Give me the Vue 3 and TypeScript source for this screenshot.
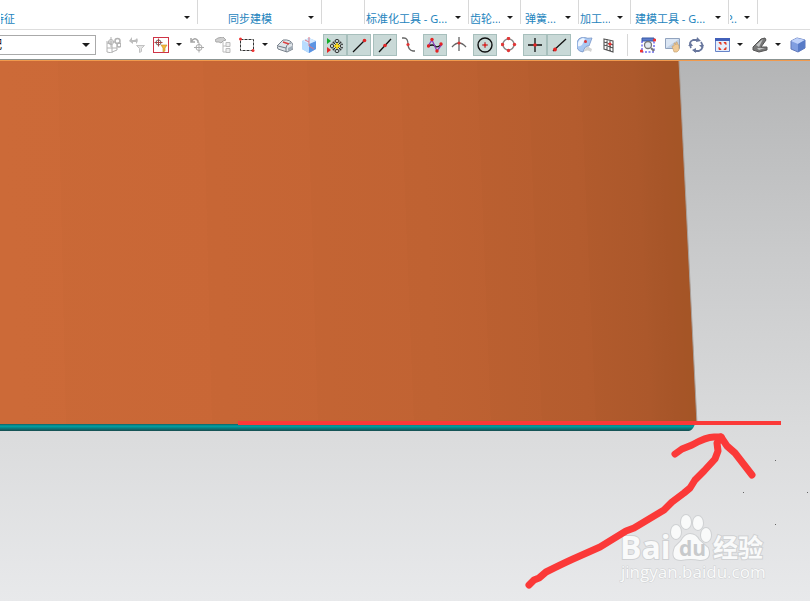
<script setup lang="ts">
interface RibbonGroup { label: string; size: string }
interface Tool { icon: string; label: string; on?: boolean; menu?: boolean }

const ribbon: RibbonGroup[] = [
  { label: '特征', size: 'feature' },
  { label: '同步建模', size: 'sync' },
  { label: '', size: 'blank' },
  { label: '标准化工具 - G...', size: 'standard' },
  { label: '齿轮...', size: 'gear' },
  { label: '弹簧...', size: 'spring' },
  { label: '加工...', size: 'gear' },
  { label: '建模工具 - G...', size: 'model' },
  { label: 'P..', size: 'mini' },
]

const selectionTools: Tool[][] = [
  [
    { icon: 'assembly', label: '装配约束' },
    { icon: 'reset', label: '重置过滤器' },
    { icon: 'filter', label: '选择过滤器', menu: true },
    { icon: 'rotate', label: '定向' },
  ],
  [
    { icon: 'tree', label: '层次选择' },
    { icon: 'marquee', label: '矩形选择', menu: true },
  ],
  [{ icon: 'body', label: '实体面' }, { icon: 'glass', label: '透明体' }],
  [{ icon: 'snap', label: '启用捕捉点', on: true }, { icon: 'endpoint', label: '端点', on: true }],
  [{ icon: 'midpoint', label: '中点', on: true }, { icon: 'control', label: '控制点' }],
  [{ icon: 'spline', label: '极点', on: true }, { icon: 'intersect', label: '交点' }],
  [{ icon: 'center', label: '圆弧中心', on: true }, { icon: 'quadrant', label: '象限点' }],
  [{ icon: 'point', label: '现有点', on: true }, { icon: 'oncurve', label: '曲线上的点', on: true }],
  [{ icon: 'surface', label: '面上的点' }, { icon: 'grid', label: '有界栅格' }],
]

const viewTools: Tool[][] = [
  [{ icon: 'zoomfit', label: '缩放' }, { icon: 'pan', label: '平移' }, { icon: 'orbit', label: '旋转' }],
  [{ icon: 'window', label: '适合窗口', menu: true }],
  [{ icon: 'section', label: '剖切', menu: true }],
  [{ icon: 'cube', label: '着色' }],
]

const sections = [selectionTools, viewTools]

const art: Record<string, string> = {
  assembly: `<g fill="none" stroke="#b2b2b2"><path d="M2 6l5 1v9l-5-1zM2 11h10M7 15l5-2V9"/><circle cx="6" cy="5" r="2.5"/><path d="M6 0v10M1 5h10"/><circle cx="12.500" cy="4" r="2.500" stroke-width="1.500"/><circle cx="14" cy="8" r="2" stroke-width="1.500"/></g>`,
  reset: `<path d="M3 0L0 4l4 3V5h3v2q3-3 1-6-1 2-3 2H3z" fill="#bcbcbc"/><path d="M7.500 8.500h8l-3 3v3l-2 1v-4z" fill="#e3e3e3" stroke="#c2c2c2"/>`,
  filter: `<rect x=".5" y=".5" width="15" height="15" fill="#fff" stroke="#cf3446"/><circle cx="5.500" cy="5.500" r="2.500" fill="none" stroke="#666"/><path d="M5.500 1.500v8M1.500 5.500h8" stroke="#a44"/><path d="M8 8h6l-2 3v3l-2 1v-4z" fill="#f8ba38" stroke="#bd882f" stroke-width=".6"/>`,
  rotate: `<path d="M2 1v4h4M2 5q4-6 7-1v2" fill="none" stroke="#a5a5a5" stroke-width="1.500"/><circle cx="10" cy="10.500" r="3" fill="none" stroke="#aaa"/><path d="M10 5.500v10M5 10.500h10" stroke="#aaa"/>`,
  tree: `<path d="M0 3l3-2 5-1 3 3-3 1-2 2-2-1-3 0z" fill="#cfcfcf" stroke="#a9a9a9"/><path d="M8 5v10h3M8 9h3" stroke="#bbb" fill="none"/><path d="M11 5.500h4v4h-4zM11 11.500h4v4h-4z" fill="#eee" stroke="#bbb"/>`,
  marquee: `<rect x="1.500" y="2.500" width="13" height="11" fill="none" stroke="#333" stroke-dasharray="3 1"/><circle cx="1.500" cy="2" r="1.500" fill="#e33"/><circle cx="14" cy="13.500" r="1.500" fill="#e33"/>`,
  body: `<path d="M0 9l6-6q8-1 10 5v4l-6 3-9-3z" fill="#dfe4e9" stroke="#7a838d"/><path d="M1 9l8 2v4M9 11q1-5 5-5" fill="none" stroke="#737d88"/><path d="M6 5l6 2" stroke="#dc4040" stroke-width="1.500"/><path d="M11 11l4-2v3l-4 2z" fill="#a2aeb9"/>`,
  glass: `<path d="M1 4l7-3 7 3v8l-7 4-7-4z" fill="#8dbdf2"/><path d="M1 4l7 3v9l-7-4z" fill="#b8dcff"/><path d="M8 7l7-3v8l-7 4z" fill="#5c94e3"/><path d="M1 4l7-3 7 3-7 3z" fill="#d5eaff"/><path d="M8 0v9l5 3M8 5L4 3" fill="none" stroke="#dc7885"/>`,
  snap: `<path d="M0 1l4 3-4 3z" fill="#13ab27"/><path d="M0 10l4 3-4 3z" fill="#e32727"/><g stroke="#222" fill="#d9e5e5"><path d="M7 6l6 6M13 6l-6 6"/><ellipse cx="10" cy="4" rx="2" ry="1.500"/><ellipse cx="10" cy="14" rx="2" ry="1.500"/><ellipse cx="5" cy="9" rx="1.500" ry="2"/><ellipse cx="15" cy="9" rx="1.500" ry="2"/></g><circle cx="6.500" cy="5.500" r="1" fill="#333"/><circle cx="13.500" cy="5.500" r="1" fill="#333"/><circle cx="6.500" cy="12.500" r="1" fill="#333"/><circle cx="13.500" cy="12.500" r="1" fill="#333"/><path d="M10 6l1 2 2 1-2 1-1 2-1-2-2-1 2-1z" fill="#ffe11b" stroke="#e9c614"/>`,
  endpoint: `<path d="M2 15L13 4" stroke="#111" stroke-width="1.300"/><circle cx="13.500" cy="3.500" r="1.800" fill="#e22424"/>`,
  midpoint: `<path d="M2 15L14 2" stroke="#111" stroke-width="1.300"/><circle cx="8" cy="8.500" r="1.800" fill="#e22424"/>`,
  control: `<path d="M1 1h2q4 0 4 6t5 7h2" fill="none" stroke="#666" stroke-width="1.300"/><circle cx="7" cy="7.500" r="1.600" fill="#e23636"/>`,
  spline: `<path d="M1 9q5-2 7 0t6-1" fill="none" stroke="#111" stroke-width="1.300"/><path d="M1 9l4-6 5 11 5-7" fill="none" stroke="#8b41bd" stroke-width="1.300"/><g fill="#e22424"><circle cx="1.500" cy="9" r="1.700"/><circle cx="5" cy="2.500" r="1.700"/><circle cx="10" cy="14" r="1.700"/><circle cx="14" cy="7" r="1.700"/></g>`,
  intersect: `<path d="M1 10q7-8 14 0M8 0v14" fill="none" stroke="#666" stroke-width="1.300"/><circle cx="8" cy="6" r="1.500" fill="#dc3535"/>`,
  center: `<circle cx="8" cy="8" r="7" fill="none" stroke="#111" stroke-width="1.400"/><path d="M8 5v6M5 8h6" stroke="#a33"/><circle cx="8" cy="8" r="1.500" fill="#e22424"/>`,
  quadrant: `<circle cx="7.500" cy="7.500" r="5.500" fill="none" stroke="#888" stroke-width="1.400"/><g fill="#e13838"><circle cx="7.500" cy="1.500" r="1.700"/><circle cx="7.500" cy="13.500" r="1.700"/><circle cx="1.500" cy="7.500" r="1.700"/><circle cx="13.500" cy="7.500" r="1.700"/></g>`,
  point: `<path d="M8 1v14M1 8h14" stroke="#111" stroke-width="1.300"/><circle cx="8" cy="8" r="1.800" fill="#e22424"/>`,
  oncurve: `<path d="M2 14L15 2" stroke="#111" stroke-width="1.300"/><circle cx="4" cy="12.500" r="1.900" fill="#e22424"/>`,
  surface: `<path d="M10 9l5 3-1 3q-3-3-8 0z" fill="#d3d3d3"/><path d="M0 5q1-4 6-5 5 2 9 1l-3 8q-4-1-6 6-4 0-6-4z" fill="#a9c8f2" stroke="#7996c7" stroke-width=".8"/><path d="M1 6q1-4 5-5l2 1-3 6q-3 2-4 1z" fill="#edf4ff"/><circle cx="8.500" cy="4.500" r="1.500" fill="#dc3535"/>`,
  grid: `<path d="M3 2l9 2v11l-9-3zM6 2v11M9 3v11M3 5l9 3M3 8l9 3" fill="none" stroke="#555" stroke-width="1.100"/><circle cx="9" cy="7" r="1.600" fill="#e33"/>`,
  zoomfit: `<path d="M2 1h12v3H2z" fill="#5d7dcb" stroke="#3659a5"/><path d="M2 4v11h12V4" fill="none" stroke="#2222e5" stroke-dasharray="2 1.500"/><circle cx="8" cy="8" r="3.500" fill="#e3eaf0" stroke="#777" stroke-width="1.300"/><path d="M11 11l3 3" stroke="#777" stroke-width="2"/><circle cx="1.500" cy="14" r="1.600" fill="#e33"/><circle cx="14.500" cy="3" r="1.600" fill="#e33"/>`,
  pan: `<path d="M1.500 1.500h14v10h-14z" fill="#dbe6f4" stroke="#91a3be"/><path d="M2 11l13-9v9z" fill="#bfd0e6"/><path d="M8 9l2 0V6h1l1 2V5h1l1 3h1v5l-2 2h-3z" fill="#f0ca96" stroke="#c19d70" stroke-width=".6"/>`,
  orbit: `<path d="M3 11Q0 5 5 3l5 0M13 5q4 6-2 9H6" fill="none" stroke="#68779e" stroke-width="1.800"/><path d="M9 0l4 4-5 1zM8 11v5l-4-3zM0 9l3-3 2 3zM11 8h5l-2 3z" fill="#68779e"/>`,
  window: `<path d="M1.500 1.500h14v13h-14z" fill="#e5edfc" stroke="#6684c9"/><path d="M1 1h15v3H1z" fill="#4260b9"/><path d="M5 5.500h2v2zM12 5.500v2l-2-2zM5 12.500v-2l2 2zM12 12.500h-2l2-2z" fill="#e33a24" stroke="#e33a24"/>`,
  section: `<path d="M1 10l8-8 4-1 1 2-5 7h6v3l-8 2-6-2z" fill="#777" stroke="#555"/><path d="M4 8l7-6-4 8zM5 11l8 0-6 2z" fill="#c3c5c5"/>`,
  cube: `<path d="M1 4l6-3 8 2v8l-7 4-7-3z" fill="#809ee0" stroke="#6078ba"/><path d="M1 4l6-3 8 2-7 4z" fill="#bfd2fa"/><path d="M8 7l7-4v8l-7 4z" fill="#587bc7"/>`,
}
</script>

<template>
  <main class="app">
    <nav class="ribbon" aria-label="功能区">
      <div v-for="(group, i) in ribbon" :key="i" class="group" :class="group.size">
        <template v-if="group.label">
          <span class="name"><span class="label">{{ group.label }}</span></span>
          <button class="more" type="button" :aria-label="group.label"><i class="caret"></i></button>
        </template>
      </div>
    </nav>

    <div class="toolbar" role="toolbar" aria-label="选择条">
      <div class="scope">
        <select aria-label="选择范围"><option>整个装配</option></select>
        <i class="caret"></i>
      </div>
      <div v-for="(section, s) in sections" :key="s" class="section">
        <div v-for="(cluster, c) in section" :key="c" class="cluster">
          <template v-for="tool in cluster" :key="tool.icon">
            <button class="tool" :class="{ on: tool.on }" type="button" :aria-label="tool.label">
              <svg viewBox="0 0 16 16" width="16" height="16" aria-hidden="true" v-html="art[tool.icon]"></svg>
            </button>
            <button v-if="tool.menu" class="drop" type="button" :aria-label="tool.label"><i class="caret"></i></button>
          </template>
        </div>
      </div>
    </div>

    <section class="viewport">
      <svg class="scene" viewBox="0 0 810 540" preserveAspectRatio="xMinYMin slice" role="img" aria-label="模型视图">
        <defs>
          <linearGradient id="backdrop" x1="0" y1="0" x2="0" y2="1">
            <stop offset="0" stop-color="#b4b5b6" />
            <stop offset=".35" stop-color="#c9cacb" />
            <stop offset=".7" stop-color="#dbdcdd" />
            <stop offset="1" stop-color="#e8e9eb" />
          </linearGradient>
          <linearGradient id="clay" gradientUnits="userSpaceOnUse" x1="0" y1="0" x2="694" y2="-34">
            <stop offset="0" stop-color="#cc6a38" />
            <stop offset=".3" stop-color="#cb6837" />
            <stop offset=".6" stop-color="#c76636" />
            <stop offset=".82" stop-color="#c06234" />
            <stop offset=".91" stop-color="#ba5f32" />
            <stop offset=".96" stop-color="#b05b2e" />
            <stop offset="1" stop-color="#a9552b" />
          </linearGradient>
          <linearGradient id="rim" x1="0" y1="0" x2="0" y2="1">
            <stop offset="0" stop-color="#155e61" />
            <stop offset=".3" stop-color="#00a3a5" />
            <stop offset=".6" stop-color="#087d80" />
            <stop offset="1" stop-color="#174b4d" />
          </linearGradient>
        </defs>
        <rect width="810" height="540" fill="url(#backdrop)" />
        <path d="M0 0H679L697 363H0z" fill="url(#clay)" />
        <g fill="#75310f" fill-opacity=".01">
          <path d="M58 0H679L697 363H66z" />
          <path d="M203 0H679L697 363H212z" />
          <path d="M307 0H679L697 363H318z" />
          <path d="M400 0H679L697 363H414z" />
          <path d="M477 0H679L697 363H491z" />
          <path d="M528 0H679L697 363H542z" />
          <path d="M580 0H679L697 363H596z" />
        </g>
        <path d="M679 0L697 363" stroke="#aaa19b" />
        <path d="M0 363H695Q693 369 689 370H0z" fill="url(#rim)" />
        <path d="M238 362H781" stroke="#fb3938" stroke-width="4" />
        <g fill="#666"><rect x="775" y="399" width="1" height="1" /><rect x="743" y="431" width="1" height="1" /><rect x="807" y="431" width="1" height="1" /><rect x="775" y="463" width="1" height="1" /></g>
        <g class="watermark">
          <text class="brand" x="620" y="498">Bai</text>
          <ellipse cx="676" cy="471" rx="5" ry="7" />
          <ellipse cx="686" cy="461" rx="5" ry="7" />
          <ellipse cx="698" cy="462" rx="5" ry="7" />
          <ellipse cx="706" cy="474" rx="5" ry="7" />
          <path d="M690 473Q685 473 681 480L675 486Q670 499 681 499Q691 497 700 499Q712 499 708 487L699 479Q696 473 690 473z" />
          <text class="du" x="679" y="495">du</text>
          <text class="han" x="713" y="496">经验</text>
          <text class="site" x="621" y="517">jingyan.baidu.com</text>
        </g>
        <g fill="none" stroke="#fb3938" stroke-width="7" stroke-linecap="round" stroke-linejoin="round">
          <path d="M529 524L534 519L539 517L546 511Q562 503 573 498L600 486L626 470L634 467L664 449L672 441L684 432L690 427L695 419L704 410L715 398L718 390L717 382L721 376" />
          <path d="M675 393L682 388L692 384Q706 376 714 376L721 376L727 385L735 392L752 414" />
        </g>
      </svg>
    </section>
  </main>
</template>

<style>
body { margin: 0; }
</style>

<style scoped>
.app {
  display: flex;
  flex-direction: column;
  height: 100vh;
  overflow: hidden;
  background: #fff;
  color: #2484bd;
  font: 11px/16px "Noto Sans", "Noto Sans CJK SC", sans-serif;
}
* { box-sizing: border-box; }
button { border: 0; padding: 0; background: none; font: inherit; }
.ribbon {
  display: flex;
  flex: none;
  height: 30px;
  padding-bottom: 5px;
  border-bottom: 1px solid #ddd;
}
.group {
  display: flex;
  flex: none;
  align-items: flex-end;
  border-right: 1px solid #d8d8d8;
  padding-left: 1px;
}
.feature { width: 198px; }
.sync { width: 124px; }
.blank { width: 43px; }
.standard { width: 104px; }
.gear { width: 52px; }
.spring { width: 58px; }
.model { width: 98px; }
.mini { width: 29px; }
.name {
  display: flex;
  flex: 1;
  justify-content: center;
  min-width: 0;
  margin-bottom: -3px;
  overflow: hidden;
  white-space: nowrap;
}
.feature .name { justify-content: flex-start; }
.feature .label { margin-left: -8px; }
.standard .name, .gear .name, .spring .name, .model .name { justify-content: flex-start; }
.spring .name, .model .name { padding-left: 3px; }
.mini .name { justify-content: flex-end; }
.more { display: flex; align-items: center; justify-content: center; flex: none; width: 20px; height: 13px; }
.caret {
  flex: none;
  width: 0;
  height: 0;
  border: 3px solid transparent;
  border-top-color: #1c1c1c;
  border-bottom: 0;
}
.toolbar {
  display: flex;
  flex: none;
  align-items: center;
  height: 31px;
  padding-bottom: 1px;
  border-bottom: 1px solid #f09a4e;
  overflow: hidden;
  box-shadow: inset 0 -1px #8b9492;
}
.scope {
  display: flex;
  align-items: center;
  justify-content: flex-end;
  flex: none;
  width: 96px;
  height: 20px;
  margin-right: 5px;
  border: 1px solid #aaa;
  border-left: 0;
  overflow: hidden;
}
.scope select {
  flex: none;
  width: 142px;
  height: 18px;
  margin-right: -14px;
  padding: 0;
  border: 0;
  appearance: none;
  background: #fff;
  color: #111;
  font: inherit;
  font-size: 12px;
}
.scope .caret {
  margin-right: 5px;
  border-width: 4px 4px 0;
  z-index: 1;
}
.section { display: flex; flex: none; gap: 2px; }
.section + .section { margin-left: 6px; padding-left: 8px; border-left: 1px solid #d8d8d8; }
.cluster { display: flex; align-items: center; }
.tool {
  display: flex;
  align-items: center;
  justify-content: center;
  width: 24px;
  height: 22px;
}
.tool.on { background: #c9d9d7; border: 1px solid #a7bfbc; }
.drop { display: flex; align-items: center; justify-content: center; width: 12px; height: 22px; }
.viewport { flex: 1; min-height: 0; }
.scene { display: block; width: 100%; height: 100%; }
.watermark { fill: #f9fafa; stroke: #cfd1d3; stroke-width: 2px; paint-order: stroke; }
.brand { font: bold 32px "Open Sans", sans-serif; }
.du { font: bold 21px "Open Sans", sans-serif; fill: #c8cacc; stroke: none; }
.han { font: bold 25px "Noto Sans CJK SC", sans-serif; }
.site { font: 17px "Open Sans", sans-serif; stroke-width: 1px; }
</style>
